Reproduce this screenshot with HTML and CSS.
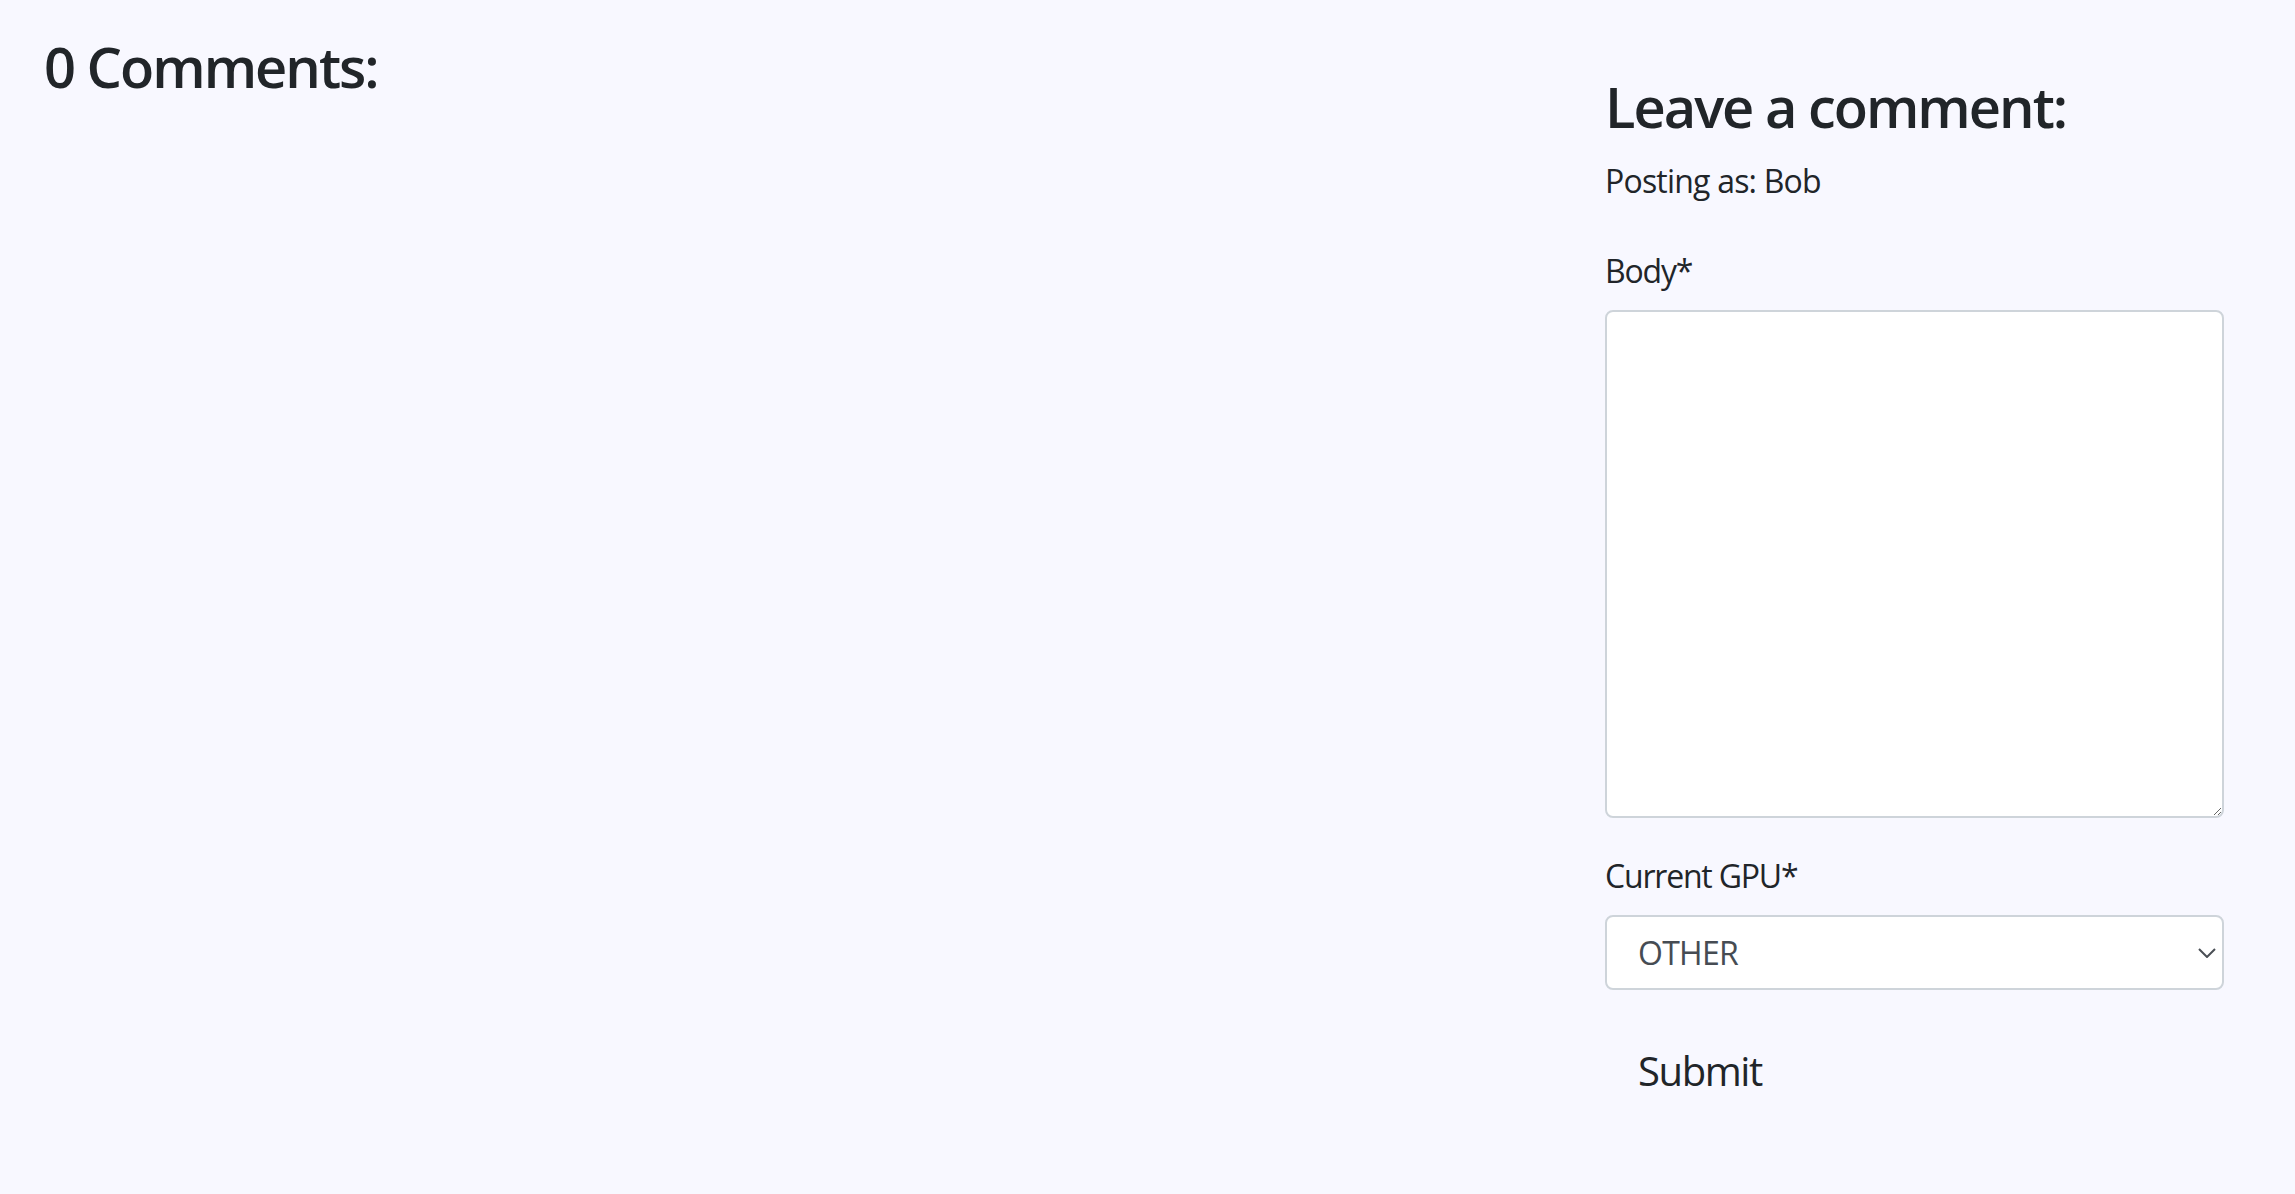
FILE: index.html
```html
<!DOCTYPE html>
<html lang="en">
<head>
<meta charset="utf-8">
<title>Comments</title>
<link rel="stylesheet" href="styles.css">
</head>
<body>
<div class="page">
  <section class="comments">
    <h3 class="heading">0 Comments:</h3>
  </section>
  <section class="form-col">
    <h3 class="heading">Leave a comment:</h3>
    <p class="posting">Posting as: Bob</p>
    <form class="comment-form">
      <label class="form-label" for="body">Body*</label>
      <textarea class="form-textarea" id="body" name="body"></textarea>
      <label class="form-label" for="gpu">Current GPU*</label>
      <div class="select-wrap">
        <select class="form-select" id="gpu" name="gpu">
          <option>OTHER</option>
        </select>
        <svg class="chevron" width="18" height="10" viewBox="0 0 18 10" aria-hidden="true">
          <path d="M1 1 L9 9 L17 1" fill="none" stroke="#4a4f55" stroke-width="2"/>
        </svg>
      </div>
      <button type="submit" class="btn-submit">Submit</button>
    </form>
  </section>
</div>
</body>
</html>
```
FILE: styles.css
```css
html, body {
  margin: 0;
  background: #f8f8ff;
}
body {
  font-family: "Open Sans", "Noto Sans", sans-serif;
  color: #212529;
}
.page {
  display: flex;
  padding: 0 71px 0 44px;
}
.comments {
  flex: 1;
}
.heading {
  font-size: 56px;
  font-weight: 600;
  line-height: 67px;
  letter-spacing: -2px;
  margin: 0;
}
.comments .heading {
  margin-top: 33px;
}
.form-col {
  width: 619px;
  padding-top: 73px;
}
.form-col .heading {
  margin-bottom: 17px;
}
.posting {
  margin: 0 0 42px;
  font-size: 32px;
  line-height: 48px;
  letter-spacing: -0.8px;
}
.comment-form {
  display: flex;
  flex-direction: column;
  align-items: flex-start;
}
.form-label {
  display: block;
  font-size: 32px;
  line-height: 48px;
  letter-spacing: -1.2px;
  margin-bottom: 15px;
}
.form-textarea {
  display: block;
  width: 100%;
  height: 508px;
  box-sizing: border-box;
  border: 2px solid #ced4da;
  border-radius: 8px;
  background: #fff;
  margin: 0 0 34px;
  font-family: inherit;
  font-size: 32px;
}
.select-wrap {
  position: relative;
  width: 100%;
  margin-bottom: 33px;
}
.form-select {
  appearance: none;
  -webkit-appearance: none;
  display: block;
  width: 100%;
  height: 75px;
  box-sizing: border-box;
  border: 2px solid #ced4da;
  border-radius: 8px;
  background: #fff;
  padding: 0 60px 0 31px;
  font-family: inherit;
  letter-spacing: -0.7px;
  font-size: 32px;
  color: #464c53;
}
.chevron {
  position: absolute;
  right: 8px;
  top: 33px;
}
.btn-submit {
  font-family: inherit;
  letter-spacing: -1.4px;
  font-size: 40px;
  line-height: 60px;
  padding: 16px 31px;
  border: 2px solid transparent;
  background: transparent;
  color: #212529;
  cursor: pointer;
}
```
